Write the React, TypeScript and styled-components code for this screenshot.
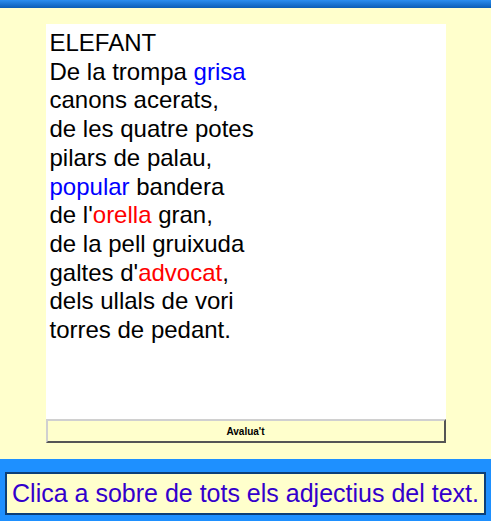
import React from 'react';
import styled, { createGlobalStyle } from 'styled-components';

const GlobalStyle = createGlobalStyle`
  html, body {
    margin: 0;
    padding: 0;
    background: #ffffcc;
  }
  body {
    font-family: 'Liberation Sans', Arial, sans-serif;
  }
`;

type Word = { text: string; color?: 'blue' | 'red' };

const poem: Word[][] = [
  [{ text: 'ELEFANT' }],
  [{ text: 'De la trompa ' }, { text: 'grisa', color: 'blue' }],
  [{ text: 'canons acerats,' }],
  [{ text: 'de les quatre potes' }],
  [{ text: 'pilars de palau,' }],
  [{ text: 'popular', color: 'blue' }, { text: ' bandera' }],
  [{ text: "de l'" }, { text: 'orella', color: 'red' }, { text: ' gran,' }],
  [{ text: 'de la pell gruixuda' }],
  [{ text: "galtes d'" }, { text: 'advocat', color: 'red' }, { text: ',' }],
  [{ text: 'dels ullals de vori' }],
  [{ text: 'torres de pedant.' }],
];

const colors = { blue: '#0000ff', red: '#ff0000' };

const App = () => {
  return (
    <>
      <GlobalStyle />
      <Page>
        <TopBar />
        <Main>
          <Column>
            <TextPanel>
              {poem.map((line, i) => (
                <Line key={i}>
                  {line.map((w, j) => (
                    <Span key={j} $color={w.color ? colors[w.color] : undefined}>
                      {w.text}
                    </Span>
                  ))}
                </Line>
              ))}
            </TextPanel>
            <CheckButton>Avalua't</CheckButton>
          </Column>
        </Main>
        <Footer>
          <MessageBox>Clica a sobre de tots els adjectius del text.</MessageBox>
        </Footer>
      </Page>
    </>
  );
};

export default App;

const Page = styled.div`
  display: flex;
  flex-direction: column;
  height: 521px;
  background: #ffffcc;
`;

const TopBar = styled.div`
  height: 8px;
  flex-shrink: 0;
  background: linear-gradient(#2a8ef0, #0b5db6);
`;

const Main = styled.div`
  flex: 1;
  display: flex;
  justify-content: center;
  padding: 16px 0;
  box-sizing: border-box;
`;

const Column = styled.div`
  width: 400px;
  display: flex;
  flex-direction: column;
`;

const TextPanel = styled.div`
  flex: 1;
  background: #ffffff;
  padding: 5px 4px;
`;

const Line = styled.div`
  font-size: 24px;
  line-height: 28.7px;
  color: #000000;
  white-space: pre;
`;

const Span = styled.span<{ $color?: string }>`
  color: ${(p) => p.$color ?? 'inherit'};
  cursor: pointer;
`;

const CheckButton = styled.button`
  height: 24px;
  margin: 0;
  padding: 0;
  background: #ffffcc;
  border: 2px solid;
  border-color: #d0d0d0 #555555 #555555 #d0d0d0;
  font-family: 'Liberation Sans', Arial, sans-serif;
  font-size: 10px;
  font-weight: bold;
  color: #000000;
`;

const Footer = styled.div`
  height: 62px;
  flex-shrink: 0;
  box-sizing: border-box;
  background: #1e90ff;
  padding: 13px 5px 6px;
  display: flex;
`;

const MessageBox = styled.div`
  flex: 1;
  background: #ffffcc;
  border: 2px solid #0b3f78;
  display: flex;
  align-items: center;
  justify-content: center;
  font-size: 25px;
  color: #3300cc;
`;
